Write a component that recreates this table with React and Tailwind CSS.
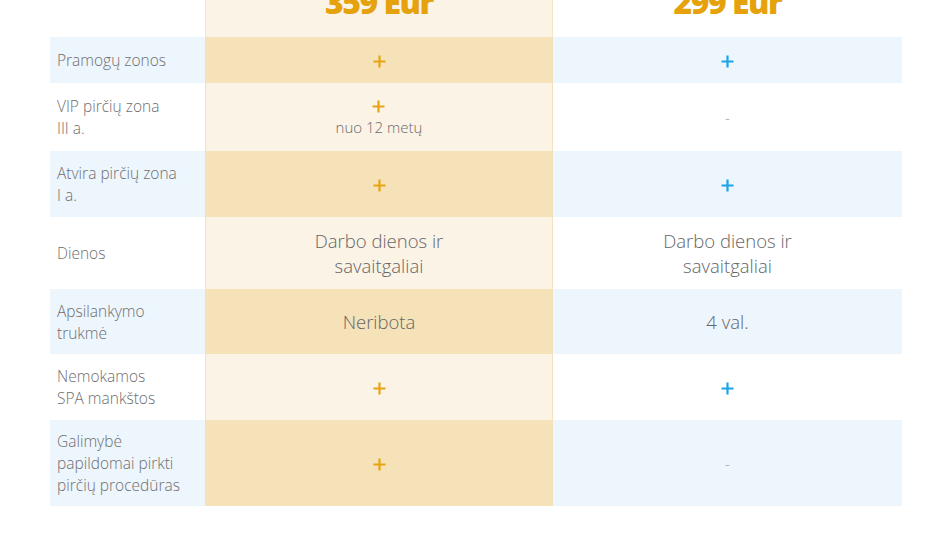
import React from 'react';

const rows = [
    { label: ['Pramogų zonos'], a: 'plus', b: 'plus', h: 46 },
    { label: ['VIP pirčių zona', 'III a.'], a: 'plus', aNote: 'nuo 12 metų', b: 'dash', h: 68 },
    { label: ['Atvira pirčių zona', 'I a.'], a: 'plus', b: 'plus', h: 66 },
    { label: ['Dienos'], a: ['Darbo dienos ir', 'savaitgaliai'], b: ['Darbo dienos ir', 'savaitgaliai'], h: 72 },
    { label: ['Apsilankymo', 'trukmė'], a: ['Neribota'], b: ['4 val.'], h: 65 },
    { label: ['Nemokamos', 'SPA mankštos'], a: 'plus', b: 'plus', h: 66 },
    { label: ['Galimybė', 'papildomai pirkti', 'pirčių procedūras'], a: 'plus', b: 'dash', h: 86 },
];

function Cell({ value, note, color }) {
    if (value === 'plus') {
        return (
            <div className="flex flex-col items-center pt-[3px]">
                <svg width="13" height="13" viewBox="0 0 13 13">
                    <path d="M6.5 0.5v12M0.5 6.5h12" stroke={color} strokeWidth="2.2" />
                </svg>
                {note && <span className="text-[15px] leading-[20px] mt-[4px] font-light text-[#6b6b6b]">{note}</span>}
            </div>
        );
    }
    if (value === 'dash') {
        return <span className="text-[15px] font-light text-[#9a9a9a]">-</span>;
    }
    return (
        <div className="text-center text-[18.5px] leading-[25px] font-light text-[#666]">
            {value.map((l) => <div key={l}>{l}</div>)}
        </div>
    );
}

export default function App() {
    return (
        <div className="bg-white w-[950px] h-[535px] overflow-hidden" style={{ fontFamily: '"Open Sans", "Noto Sans", sans-serif' }}>
            <div className="ml-[50px] w-[852px]">
                {/* цены в шапке, верх обрезан как на скриншоте */}
                <div className="grid grid-cols-[155px_348px_349px] h-[37px]">
                    <div />
                    <div className="bg-[#fbf3e6] border-x border-[#f5e6c6] flex justify-center">
                        <span className="mt-[-14px] text-[32px] leading-none font-extrabold tracking-[-1.5px] text-[#e5a20c]">359 Eur</span>
                    </div>
                    <div className="flex justify-center">
                        <span className="mt-[-14px] text-[32px] leading-none font-extrabold tracking-[-1.5px] text-[#e5a20c]">299 Eur</span>
                    </div>
                </div>

                {rows.map((r, i) => {
                    const blue = i % 2 === 0;
                    return (
                        <div key={i} className="grid grid-cols-[155px_348px_349px]" style={{ height: r.h }}>
                            <div className={`${blue ? 'bg-[#edf5fd]' : 'bg-white'} flex flex-col justify-center pl-[7px] text-[15.5px] leading-[22px] font-light text-[#6e6e6e]`}>
                                {r.label.map((l) => <div key={l}>{l}</div>)}
                            </div>
                            <div className={`${blue ? 'bg-[#f5e2b9]' : 'bg-[#fbf3e6]'} border-x border-[#f3e1bd] flex items-center justify-center`}>
                                <Cell value={r.a} note={r.aNote} color="#e8a313" />
                            </div>
                            <div className={`${blue ? 'bg-[#edf5fd]' : 'bg-white'} flex items-center justify-center`}>
                                <Cell value={r.b} color="#1ba4e6" />
                            </div>
                        </div>
                    );
                })}
            </div>
        </div>
    );
}
